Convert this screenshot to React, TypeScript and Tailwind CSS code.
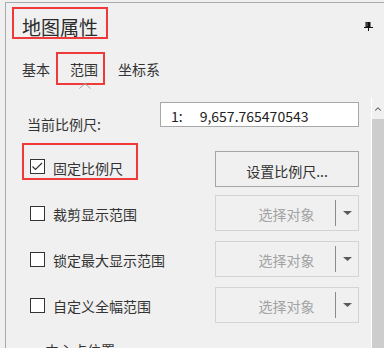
import { ChevronUp } from 'lucide-react';

// 地图属性 面板 - 范围 页
function PinIcon() {
  return (
    <svg width="9" height="9" viewBox="0 0 9 9" className="absolute left-[358px] top-[19px]">
      <rect x="1.5" y="0" width="5" height="5" fill="#111" />
      <rect x="2.5" y="0.5" width="1" height="4" fill="#777" />
      <rect x="0" y="5" width="9" height="1" fill="#111" />
      <rect x="4" y="6" width="1" height="3" fill="#111" />
    </svg>
  );
}

function CheckBox({ checked }: { checked?: boolean }) {
  return (
    <span className="flex h-[15px] w-[15px] shrink-0 items-center justify-center border border-[#333] bg-white">
      {checked && (
        <svg width="13" height="13" viewBox="0 0 13 13">
          <polyline points="1.5,6.5 4.5,9.5 11,3" fill="none" stroke="#333" strokeWidth="1.2" />
        </svg>
      )}
    </span>
  );
}

function SelectBox() {
  return (
    <div className="flex h-[36px] w-[144px] items-center border border-[#d4d4d4] bg-[#f0f0f0]">
      <div className="flex flex-1 justify-center pl-[22px] pt-[2px] text-[14px] leading-[20px] text-[#a3a3a3]">
        选择对象
      </div>
      <div className="h-[26px] w-px bg-[#8a8a8a]" />
      <div className="flex w-[22px] items-center justify-center">
        <svg width="9" height="4" viewBox="0 0 9 4">
          <polygon points="0,0 9,0 4.5,4" fill="#5a5a5a" />
        </svg>
      </div>
    </div>
  );
}

const rows = ['裁剪显示范围', '锁定最大显示范围', '自定义全幅范围'];

export default function App() {
  return (
    <div className="h-[348px] w-[384px] overflow-hidden bg-[#f0f0f0] pl-[5px] pt-[2px] font-['Noto_Sans_CJK_SC',sans-serif] text-[#333]">
      <div className="relative flex h-full flex-col border-l border-t border-[#a9a9a9]">
        <PinIcon />

        {/* 标题 */}
        <div className="pl-[6px] pt-[4px]">
          <div className="flex h-[32px] w-[96px] items-end border-2 border-[#f03a3a] pl-[8px] text-[19px] leading-[20px] text-[#2b2b2b]">
            地图属性
          </div>
        </div>

        {/* 页签 */}
        <div className="mt-[20px] flex h-[20px] gap-[20px] pl-[16px] text-[14px] leading-[20px]">
          <span>基本</span>
          <span className="relative">
            范围
            <span className="absolute -bottom-[6px] -left-[14px] -right-[7px] -top-[7px] border-2 border-[#f03a3a]" />
          </span>
          <span>坐标系</span>
        </div>

        <div className="relative ml-[6px] mt-[9px] h-px bg-[#a0a0a0]">
          <svg width="12" height="6" viewBox="0 0 12 6" className="absolute -top-[5px] left-[67px]">
            <rect x="1" y="5" width="10" height="1" fill="#f0f0f0" />
            <polyline points="0.5,5.5 6,0.5 11.5,5.5" fill="none" stroke="#a0a0a0" strokeWidth="1" />
          </svg>
        </div>

        <div className="flex flex-1">
          <div className="flex-1">
            {/* 当前比例尺 */}
            <div className="mt-[14px] flex h-[25px] justify-between pl-[21px] pr-[12px]">
              <span className="mt-[12px] text-[14px] leading-[20px]">当前比例尺:</span>
              <div className="flex h-[25px] w-[199px] items-center border border-[#a8a8a8] bg-white pl-[10px] pt-[2px] text-[14px] leading-[20px] text-[#222]">
                <span>1:</span>
                <span className="ml-[17px]">9,657.765470543</span>
              </div>
            </div>

            {/* 固定比例尺 */}
            <div className="relative mt-[24px] flex h-[36px] items-center pl-[24px] pr-[12px]">
              <span className="mb-[5px]">
                <CheckBox checked />
              </span>
              <span className="mb-[2px] ml-[8px] text-[14px] leading-[20px]">固定比例尺</span>
              <button className="ml-auto flex h-[36px] w-[144px] items-center justify-center border border-[#a6a6a6] bg-[#f0f0f0] pt-[3px] text-[14px] leading-[20px] text-[#333]">
                设置比例尺...
              </button>
              <span className="absolute left-[16px] top-[-8px] h-[37px] w-[116px] border-2 border-[#f03a3a]" />
            </div>

            <div className="mt-[8px] flex flex-col gap-[10px]">
              {rows.map((r) => (
                <div key={r} className="flex h-[36px] items-center pl-[24px] pr-[12px]">
                  <CheckBox />
                  <span className="ml-[8px] mt-[2px] text-[14px] leading-[20px]">{r}</span>
                  <div className="ml-auto">
                    <SelectBox />
                  </div>
                </div>
              ))}
            </div>

            <div className="mt-[17px] pl-[39px] text-[14px] leading-[20px]">中心点位置</div>
          </div>

          {/* 滚动条 */}
          <div className="mt-[10px] flex w-[13px] flex-col border-l border-white">
            <div className="flex h-[21px] items-center justify-center">
              <ChevronUp size={10} strokeWidth={2.5} color="#555" />
            </div>
            <div className="flex-1 bg-[#cdcdcd]" />
          </div>
        </div>
      </div>
    </div>
  );
}
